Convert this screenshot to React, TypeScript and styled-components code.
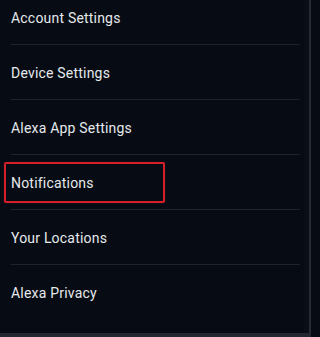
import * as React from 'react';

import styled, { createGlobalStyle } from 'styled-components';

const GlobalStyle = createGlobalStyle`
  html, body {
    margin: 0;
    padding: 0;
    background-color: #070c14;
  }
`;

const Screen = styled.div`
  width: 311px;
  height: 337px;
  overflow: hidden;

  display: flex;
  flex-direction: column;

  background-color: #070c14;
  font-family: Roboto, 'Liberation Sans', sans-serif;
`;

const Body = styled.div`
  flex: 1;
  min-height: 0;

  display: flex;
`;

const List = styled.ul`
  flex: 1;
  list-style: none;

  margin: -10px 0 0 0;
  padding: 0;
`;

const Gutter = styled.div`
  width: 7px;

  display: flex;

  background-color: #0a0f17;
`;

const GutterEdge = styled.div`
  margin-left: auto;
  width: 2px;

  background-color: #262c33;
`;

const Row = styled.li<{ $last?: boolean }>`
  position: relative;
  height: 55px;

  display: flex;
  align-items: center;

  margin: 0 4px 0 11px;
  border-bottom: 1px solid ${({ $last }) => ($last ? 'transparent' : '#1d242d')};
  box-sizing: border-box;
`;

const Label = styled.span`
  font-size: 14px;
  font-weight: 400;
  letter-spacing: 0.2px;
  color: #e6e9ec;

  padding-top: 2px;
`;

const Highlight = styled.div`
  position: absolute;
  left: -7px;
  top: 7px;

  width: 161px;
  height: 41px;
  box-sizing: border-box;

  border: 2px solid #d4202b;
  border-radius: 2px;
  box-shadow: 0 0 1px rgba(212, 32, 43, 0.6);
`;

const BottomBar = styled.div`
  height: 4px;

  background-color: #21282f;
`;

const items = [
  'Account Settings',
  'Device Settings',
  'Alexa App Settings',
  'Notifications',
  'Your Locations',
  'Alexa Privacy',
];

const App: React.FC = () => {
  return (
    <>
      <GlobalStyle />
      <Screen>
        <Body>
          <List>
            {items.map((item, i) => (
              <Row key={item} $last={i === items.length - 1}>
                {item === 'Notifications' && <Highlight />}
                <Label>{item}</Label>
              </Row>
            ))}
          </List>
          <Gutter>
            <GutterEdge />
          </Gutter>
        </Body>
        <BottomBar />
      </Screen>
    </>
  );
};

export default App;
